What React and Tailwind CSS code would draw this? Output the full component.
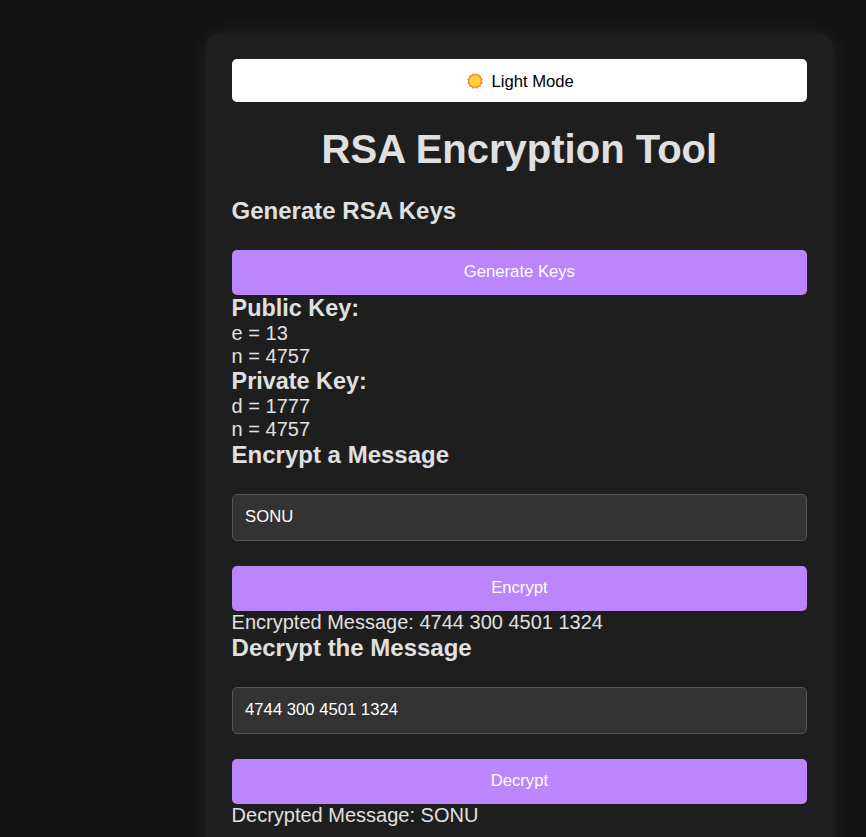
const h2 = "text-[24px] font-bold leading-[27px]";
const h3 = "text-[23.4px] font-bold leading-[26px] pb-px";
const button =
  "block h-[45px] w-full rounded-[5px] bg-[#bb86fc] pb-[2px] text-center text-[16.67px] text-white";
const input =
  "mt-[26px] mb-[25px] block h-[47px] w-full rounded-[5px] border border-[#555] bg-[#333] px-[12.5px] pb-[2px] text-[16.67px] text-white outline-none";

function SunIcon() {
  return (
    <svg className="mr-[7px] h-[18px] w-[18px]" viewBox="0 0 18 18">
      <g fill="#fd8b35">
        <rect x="3.2" y="3.2" width="11.6" height="11.6" rx="0.6" />
        <rect x="3.2" y="3.2" width="11.6" height="11.6" rx="0.6" transform="rotate(30 9 9)" />
        <rect x="3.2" y="3.2" width="11.6" height="11.6" rx="0.6" transform="rotate(60 9 9)" />
        <circle cx="9" cy="9" r="6.9" />
      </g>
      <circle cx="9" cy="9" r="5.7" fill="#ffd23e" />
    </svg>
  );
}

export default function App() {
  return (
    <div className="h-[837px] overflow-hidden bg-[#121212] pt-[33px] font-['Liberation_Sans',Arial,sans-serif] text-[20px] leading-[23px] text-[#e0e0e0]">
      <main className="ml-[205.6px] h-[900px] w-[627.6px] rounded-[15px] bg-[#1e1e1e] px-[26px] pt-[26px] shadow-[0_0_25px_rgba(255,255,255,0.08)]">
        <button className="flex h-[43px] w-full items-center justify-center rounded-[5px] bg-white pt-px pl-[1.5px] text-[16.67px] text-black">
          <SunIcon />
          Light Mode
        </button>
        <h1 className="mt-[24px] text-center text-[40px] font-bold leading-[46px]">RSA Encryption Tool</h1>
        <h2 className={`${h2} mt-[25px] mb-[26px]`}>Generate RSA Keys</h2>
        <button className={button}>Generate Keys</button>
        <h3 className={h3}>Public Key:</h3>
        <p>e = 13</p>
        <p>n = 4757</p>
        <h3 className={h3}>Private Key:</h3>
        <p>d = 1777</p>
        <p>n = 4757</p>
        <h2 className={h2}>Encrypt a Message</h2>
        <input className={input} defaultValue="SONU" />
        <button className={button}>Encrypt</button>
        <p>Encrypted Message: 4744 300 4501 1324</p>
        <h2 className={h2}>Decrypt the Message</h2>
        <input className={input} defaultValue="4744 300 4501 1324" />
        <button className={button}>Decrypt</button>
        <p>Decrypted Message: SONU</p>
      </main>
    </div>
  );
}
